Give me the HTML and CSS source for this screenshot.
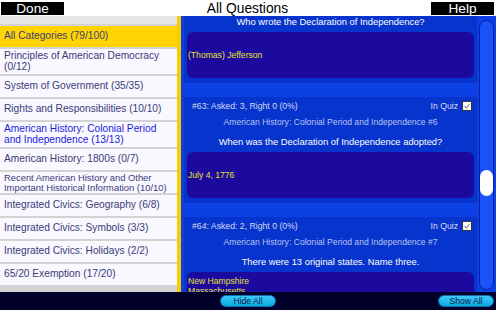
FILE: index.html
```html
<!DOCTYPE html>
<html lang="en">
<head>
    <meta charset="UTF-8">
    <title>All Questions</title>
    <link rel="stylesheet" href="styles.css">
</head>
<body>
    <div class="header">
        <button class="top-btn">Done</button>
        <h1>All Questions</h1>
        <button class="top-btn">Help</button>
    </div>

    <div class="main">
        <ul class="categories">
            <li class="cat-top"></li>
            <li class="selected">All Categories (79/100)</li>
            <li>Principles of American Democracy (0/12)</li>
            <li>System of Government (35/35)</li>
            <li>Rights and Responsibilities (10/10)</li>
            <li class="current">American History: Colonial Period and Independence (13/13)</li>
            <li>American History: 1800s (0/7)</li>
            <li class="small">Recent American History and Other Important Historical Information (10/10)</li>
            <li>Integrated Civics: Geography (6/8)</li>
            <li>Integrated Civics: Symbols (3/3)</li>
            <li>Integrated Civics: Holidays (2/2)</li>
            <li>65/20 Exemption (17/20)</li>
        </ul>

        <div class="questions">
            <div class="cards">
                <!-- scrolled: only the bottom of this card is in view -->
                <div class="card partial">
                    <div class="question">Who wrote the Declaration of Independence?</div>
                    <div class="answer">(Thomas) Jefferson</div>
                </div>

                <div class="card">
                    <div class="meta">
                        <span>#63: Asked: 3, Right 0 (0%)</span>
                        <span class="quiz">In Quiz <svg class="check" width="10" height="10" viewBox="0 0 10 10"><rect x="0.5" y="0.5" width="9" height="9" fill="#fff" stroke="#333"/><path d="M2.5 5.2 L4.3 7.3 L7.8 2.6" fill="none" stroke="#555" stroke-width="0.9"/></svg></span>
                    </div>
                    <div class="category">American History: Colonial Period and Independence #6</div>
                    <div class="question">When was the Declaration of Independence adopted?</div>
                    <div class="answer">July 4, 1776</div>
                </div>

                <div class="card">
                    <div class="meta">
                        <span>#64: Asked: 2, Right 0 (0%)</span>
                        <span class="quiz">In Quiz <svg class="check" width="10" height="10" viewBox="0 0 10 10"><rect x="0.5" y="0.5" width="9" height="9" fill="#fff" stroke="#333"/><path d="M2.5 5.2 L4.3 7.3 L7.8 2.6" fill="none" stroke="#555" stroke-width="0.9"/></svg></span>
                    </div>
                    <div class="category">American History: Colonial Period and Independence #7</div>
                    <div class="question">There were 13 original states. Name three.</div>
                    <div class="answer list">
                        <span>New Hampshire</span>
                        <span>Massachusetts</span>
                    </div>
                </div>
            </div>

            <div class="scrollbar">
                <div class="thumb"></div>
            </div>
        </div>
    </div>

    <div class="footer">
        <span></span>
        <button class="pill">Hide All</button>
        <button class="pill show">Show All</button>
    </div>
</body>
</html>
```

FILE: styles.css
```css
body {
    margin: 0;
    width: 496px;
    height: 310px;
    display: flex;
    flex-direction: column;
    overflow: hidden;
    font-family: "Liberation Sans", Arial, sans-serif;
    background: #fff;
}

/* top bar */
.header {
    height: 16px;
    display: flex;
    align-items: center;
    justify-content: space-between;
    padding: 1px 2px 0 1px;
    box-sizing: border-box;
    background: #fff;
}
.top-btn {
    width: 63px;
    height: 13px;
    padding: 0;
    border: 0;
    background: #000;
    color: #fff;
    font-family: "Liberation Sans", Arial, sans-serif;
    font-size: 13.6px;
    line-height: 13px;
}
.header h1 {
    margin: 0;
    font-size: 13.8px;
    font-weight: normal;
    line-height: 14px;
    color: #000;
}

.main {
    flex: 1;
    display: flex;
    min-height: 0;
}

/* category list */
.categories {
    width: 177px;
    margin: 0;
    padding: 0;
    list-style: none;
    display: flex;
    flex-direction: column;
    gap: 2px;
    background: #d3d3d3;
    border-right: 4px solid #f7cd00;
    overflow: hidden;
}
.categories li {
    flex: none;
    min-height: 21px;
    box-sizing: border-box;
    display: flex;
    align-items: center;
    padding: 2px 5px 2px 4px;
    background: #f8f8fe;
    color: #3b3b7a;
    font-size: 10.2px;
    line-height: 10.5px;
}
.categories .cat-top {
    min-height: 8px;
    height: 8px;
    padding: 0;
    background: #e6e6e6;
}
.categories .selected {
    background: #ffd400;
}
.categories .current {
    color: #1c1cdc;
}
.categories .small {
    font-size: 9.4px;
    line-height: 9.6px;
    padding-top: 1px;
    padding-bottom: 1px;
}

/* question list */
.questions {
    flex: 1;
    display: flex;
    background: #0c40e4;
    min-width: 0;
}
.cards {
    flex: 1;
    overflow: hidden;
    padding: 0 1px 0 3px;
    display: flex;
    flex-direction: column;
    gap: 14px;
}
.card {
    flex: none;
    padding: 4px 0 5px;
    background: #0634cc;
}
.card.partial {
    padding-top: 0;
}
.card.partial .question {
    margin-top: 1px;
}
.meta {
    height: 10px;
    display: flex;
    align-items: center;
    justify-content: space-between;
    padding: 0 5px 0 8px;
    color: #d6daf4;
    font-size: 8.7px;
}
.quiz {
    display: flex;
    align-items: center;
    gap: 4px;
}
.check {
    display: block;
}
.category {
    margin-top: 6px;
    line-height: 10px;
    text-align: center;
    color: #b9c3f2;
    font-size: 8.6px;
}
.question {
    margin-top: 10px;
    line-height: 10px;
    text-align: center;
    color: #fff;
    font-size: 9.4px;
}
.answer {
    margin: 5px 3px 0;
    min-height: 46px;
    box-sizing: border-box;
    padding: 4px 1px;
    display: flex;
    flex-direction: column;
    justify-content: center;
    background: #1c0a9e;
    border-radius: 6px;
    color: #e8e02c;
    font-size: 8.6px;
    line-height: 10px;
}
.answer.list {
    justify-content: flex-start;
}

.scrollbar {
    width: 15px;
    margin: 4px 2px 2px 1px;
    box-sizing: border-box;
    border: 1px solid #0a1e98;
    border-radius: 8px;
    background: #1c52fa;
}
.thumb {
    width: 13px;
    height: 26px;
    margin-top: 149px;
    border-radius: 7px;
    background: #fff;
}

/* bottom bar */
.footer {
    height: 18px;
    display: grid;
    grid-template-columns: 1fr auto 1fr;
    align-items: center;
    padding: 0 2px;
    background: #00002a;
}
.pill {
    width: 56px;
    height: 12px;
    padding: 0;
    border: 1px solid #0a72a8;
    border-radius: 6px;
    background: linear-gradient(#3ccaf8, #0aaae2);
    color: #13204c;
    font-family: "Liberation Sans", Arial, sans-serif;
    font-size: 8.6px;
    line-height: 10px;
}
.pill.show {
    justify-self: end;
}
```
